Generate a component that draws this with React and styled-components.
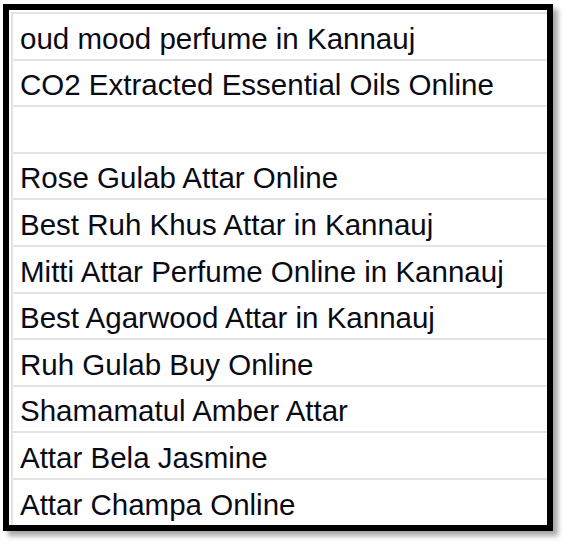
import React from 'react'
import styled, { createGlobalStyle } from 'styled-components'

const GlobalStyle = createGlobalStyle`
	html, body {
		margin: 0;
		padding: 0;
		background: #ffffff;
	}
	* {
		box-sizing: border-box;
	}
`

const Page = styled.div`
	width: 567px;
	height: 544px;
	padding: 4px 0 0 3px;
`

const Frame = styled.div`
	width: 550px;
	height: 527px;
	border: 6px solid #000000;
	background: #ffffff;
	box-shadow: 5px 5px 5px rgba(0, 0, 0, 0.35);
	padding: 2px 0 0 2px;
	overflow: hidden;
`

const Sheet = styled.div`
	display: flex;
	flex-direction: column;
	border-left: 2px solid #e3e3e3;
	height: 100%;
`

const Row = styled.div`
	height: 46.6px;
	flex-shrink: 0;
	display: flex;
	align-items: flex-end;
	padding: 0 0 5px 7px;
	border-top: 2px solid #e3e3e3;
	font-family: 'Liberation Sans', Arial, sans-serif;
	font-size: 29.5px;
	line-height: 30px;
	color: #0a0a14;
	white-space: nowrap;
`

const rows = [
	'oud mood perfume in Kannauj',
	'CO2 Extracted Essential Oils Online',
	'',
	'Rose Gulab Attar Online',
	'Best Ruh Khus Attar in Kannauj',
	'Mitti Attar Perfume Online in Kannauj',
	'Best Agarwood Attar in Kannauj',
	'Ruh Gulab Buy Online',
	'Shamamatul Amber Attar',
	'Attar Bela Jasmine',
	'Attar Champa Online',
]

export default function App() {
	return (
		<>
			<GlobalStyle />
			<Page>
				<Frame>
					<Sheet>
						{rows.map((text, i) => (
							<Row key={i}>{text}</Row>
						))}
					</Sheet>
				</Frame>
			</Page>
		</>
	)
}
